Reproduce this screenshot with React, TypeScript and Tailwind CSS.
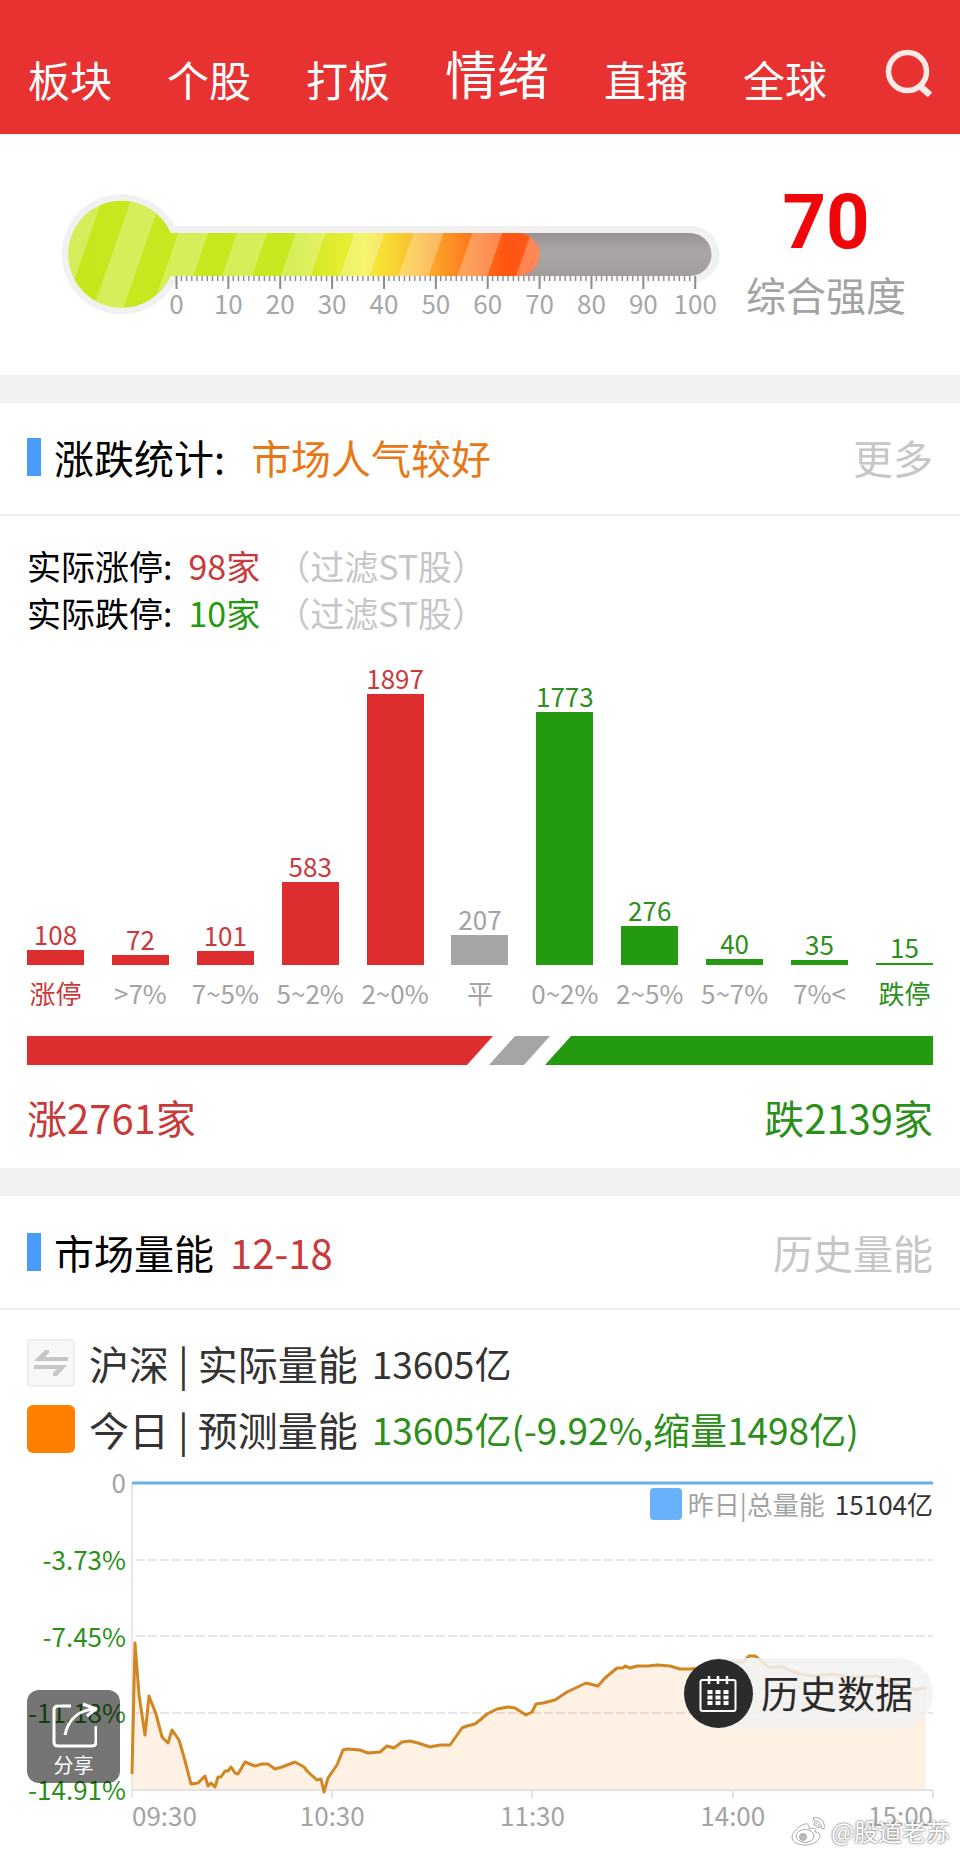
import { useState } from "react";

type Tone = "up" | "flat" | "down";

interface Range {
  label: string;
  count: number;
  tone: Tone;
}

const tabs = ["板块", "个股", "打板", "情绪", "直播", "全球"];

const ranges: Range[] = [
  { label: "涨停", count: 108, tone: "up" },
  { label: ">7%", count: 72, tone: "up" },
  { label: "7~5%", count: 101, tone: "up" },
  { label: "5~2%", count: 583, tone: "up" },
  { label: "2~0%", count: 1897, tone: "up" },
  { label: "平", count: 207, tone: "flat" },
  { label: "0~2%", count: 1773, tone: "down" },
  { label: "2~5%", count: 276, tone: "down" },
  { label: "5~7%", count: 40, tone: "down" },
  { label: "7%<", count: 35, tone: "down" },
  { label: "跌停", count: 15, tone: "down" },
];

const barTone = {
  up: "bg-[#dd2d2f]",
  flat: "bg-[#a5a5a5]",
  down: "bg-[#239a10]",
};

const textTone = {
  up: "text-[#c9393a]",
  flat: "text-[#a3a3a3]",
  down: "text-[#2b8f1a]",
};

const BAR_MAX = 271;
const maxCount = 1897;

const yLabels = ["0", "-3.73%", "-7.45%", "-11.18%", "-14.91%"];

// plot area is 801 x 307, y grows downwards from the 0 line
const points: [number, number][] = [
  [0, 291], [3, 160], [7, 212], [13, 252], [17, 213], [24, 231], [30, 254], [36, 260],
  [40, 247], [47, 257], [52, 274], [59, 301], [66, 300], [73, 293], [76, 303], [79, 300],
  [83, 304], [86, 294], [89, 294], [93, 288], [96, 288], [99, 284], [103, 290], [106, 291],
  [113, 279], [123, 283], [130, 281], [136, 281], [143, 286], [150, 284], [163, 279],
  [172, 284], [176, 289], [185, 297], [189, 296], [192, 309], [196, 295], [205, 282],
  [211, 267], [215, 266], [228, 267], [236, 270], [248, 269], [255, 263], [262, 265],
  [270, 259], [278, 258], [286, 260], [298, 264], [308, 262], [318, 262], [323, 255], [330, 245],
  [335, 243], [343, 241], [348, 237], [355, 231], [365, 226], [376, 224], [383, 225],
  [394, 232], [400, 229], [404, 221], [411, 220], [423, 217], [435, 209], [454, 200],
  [466, 203], [473, 195], [485, 185], [491, 185], [493, 183], [498, 185], [505, 183],
  [516, 183], [525, 182], [538, 183], [548, 186], [559, 186], [574, 184], [588, 181],
  [598, 179], [611, 179], [617, 173], [623, 173], [633, 181], [636, 184], [650, 184],
  [668, 191], [681, 193], [701, 191], [715, 194], [745, 193], [761, 200], [785, 207],
  [790, 205], [794, 206],
];
const linePath = "M" + points.map((p) => p.join(" ")).join("L");

const Thermometer = () => {
  const ticks = Array.from({ length: 101 }, (_, i) => i);
  const stripes = [-2, -1, 0, 1, 2, 3, 4, 5, 6];
  return (
    <svg viewBox="60 190 662 128" className="min-w-0 flex-1 overflow-visible" role="img" aria-label="综合强度 70">
      <defs>
        <linearGradient id="heat" gradientUnits="userSpaceOnUse" x1="68" y1="0" x2="540" y2="0">
          <stop offset="0" stopColor="#c5e81d" />
          <stop offset="0.48" stopColor="#c9e81f" />
          <stop offset="0.63" stopColor="#f2f03a" />
          <stop offset="0.72" stopColor="#fac52f" />
          <stop offset="0.82" stopColor="#fc8a22" />
          <stop offset="0.93" stopColor="#ff5512" />
          <stop offset="1" stopColor="#ff5a1a" />
        </linearGradient>
        <linearGradient id="tube" x1="0" y1="0" x2="0" y2="1">
          <stop offset="0" stopColor="#989494" />
          <stop offset="0.45" stopColor="#aba6a5" />
          <stop offset="1" stopColor="#a19d9c" />
        </linearGradient>
        <clipPath id="fill">
          <circle cx="121.7" cy="254.3" r="53.5" />
          <path d="M160 233H518a21.5 21.5 0 0 1 0 43H160Z" />
        </clipPath>
      </defs>
      <circle cx="121.7" cy="254.3" r="60" fill="#f1f1f1" />
      <path d="M150 226H691a28.5 28.5 0 0 1 0 57H150Z" fill="#f1f1f1" />
      <path d="M160 233H690a21.5 21.5 0 0 1 0 43H160Z" fill="url(#tube)" />
      <g clipPath="url(#fill)">
        <rect x="60" y="195" width="490" height="120" fill="url(#heat)" />
        {stripes.map((k) => {
          const x = 178.3 + k * 58.8;
          return (
            <path
              key={k}
              d={`M${x + 14} 193h30L${x + 2} 313h-30Z`}
              fill="#fff"
              fillOpacity="0.27"
            />
          );
        })}
      </g>
      <rect x="176" y="276" width="520" height="7" fill="#fff" fillOpacity="0.7" />
      {ticks.map((t) => (
        <rect
          key={t}
          x={175.5 + t * 5.187}
          y="276"
          width={t % 10 === 0 ? 2 : 1.4}
          height={t % 10 === 0 ? 13 : 5}
          fill="#8c8c8c"
        />
      ))}
      {ticks
        .filter((t) => t % 10 === 0)
        .map((t) => (
          <text key={t} x={176.5 + t * 5.187} y="314" fontSize="26" fill="#a6a6a6" textAnchor="middle">
            {t}
          </text>
        ))}
    </svg>
  );
};

const Histogram = () => (
  <div className="mt-[26px] flex justify-between">
    {ranges.map((r) => (
      <div key={r.label} className="flex w-[57px] flex-col items-center justify-end whitespace-nowrap text-[26px]">
        <span className={`leading-[32px] ${textTone[r.tone]}`}>{r.count}</span>
        <div
          className={`w-full ${barTone[r.tone]}`}
          style={{ height: Math.round((r.count / maxCount) * BAR_MAX) }}
        />
        <span
          className={`mt-3 leading-[32px] ${
            r.label === "涨停" || r.label === "跌停" ? textTone[r.tone] : "text-[#a3a3a3]"
          }`}
        >
          {r.label}
        </span>
      </div>
    ))}
  </div>
);

const VolumeChart = () => (
  <div className="relative mt-3 flex gap-[6px] text-[26px] leading-[32px]">
    <div className="flex h-[339px] w-[99px] flex-col justify-between text-right whitespace-nowrap">
      {yLabels.map((l) => (
        <span key={l} className={l === "0" ? "text-[#a3a3a3]" : "text-[#2b8f1a]"}>
          {l}
        </span>
      ))}
    </div>
    <div className="min-w-0 flex-1 pt-[17px]">
      <svg viewBox="0 0 801 316" preserveAspectRatio="none" className="block h-[316px] w-full overflow-visible">
        {[77, 153, 230].map((y) => (
          <path key={y} d={`M4 ${y}H801`} stroke="#e6e6e6" strokeWidth="2" strokeDasharray="9 3" />
        ))}
        <path d={`${linePath}V307H0Z`} fill="#ff8200" fillOpacity="0.11" />
        <path d="M0 0V315" stroke="#e8e8e8" strokeWidth="2" fill="none" />
        <path d="M0 307H801M200 307v8M400 307v8M601 307v8M801 307v8" stroke="#e2e2e2" strokeWidth="2" fill="none" />
        <path d="M0 0H801" stroke="#6fb0e2" strokeWidth="3" />
        <path d={linePath} fill="none" stroke="#d18623" strokeWidth="3" strokeLinejoin="round" />
      </svg>
      <div className="grid grid-cols-8 text-[#a3a3a3]">
        <span>09:30</span>
        <span className="col-span-2 text-center">10:30</span>
        <span className="col-span-2 text-center">11:30</span>
        <span className="col-span-2 text-center">14:00</span>
        <span className="text-right">15:00</span>
      </div>
    </div>
    <div className="absolute top-[22px] right-0 flex items-center">
      <span className="mr-[6px] size-8 rounded-sm bg-[#69b1fb]" />
      <span className="mr-[10px] text-[#a3a3a3]">昨日|总量能</span>
      <span className="text-[#333]">15104亿</span>
    </div>
  </div>
);

const App: React.FC = () => {
  const [activeTab, setActiveTab] = useState("情绪");

  return (
    <div className="relative min-h-screen bg-white pb-5 font-['Noto_Sans_CJK_SC',sans-serif] text-black">
      {/* Top tabs */}
      <header className="flex items-end justify-between bg-[#e83232] pt-[40px] pr-[27px] pb-7 pl-7 text-white">
        <nav className="flex items-end gap-[55px] whitespace-nowrap">
          {tabs.map((t) => (
            <button
              key={t}
              onClick={() => setActiveTab(t)}
              className={t === activeTab ? "text-[52px] leading-[66px]" : "text-[42px] leading-[54px]"}
            >
              {t}
            </button>
          ))}
        </nav>
        <button aria-label="搜索" className="mb-[9px]">
          <svg viewBox="0 0 48 48" className="size-12" fill="none" stroke="#ffe9e6" strokeWidth="5.500">
            <circle cx="22.500" cy="22.500" r="19" />
            <path d="M34.500 36.500l10.500 9.500" strokeWidth="6.500" />
          </svg>
        </button>
      </header>

      {/* Overall strength */}
      <section className="flex items-start border-b-[28px] border-[#f2f2f2] pt-14 pr-[53px] pb-[57px] pl-[60px]">
        <Thermometer />
        <div className="ml-[23px] flex w-[162px] flex-col items-center">
          <span className="font-['Roboto',sans-serif] text-[76px] leading-[64px] font-bold text-[#f00508]">70</span>
          <span className="mt-4 text-[40px] leading-[48px] whitespace-nowrap text-[#a3a3a3]">综合强度</span>
        </div>
      </section>

      {/* Advance / decline */}
      <section className="border-b-[28px] border-[#f2f2f2]">
        <div className="flex h-[113px] items-center border-b-2 border-[#ececec] px-[27px] pb-1 text-[40px] leading-[48px]">
          <span className="mr-[13px] h-[38px] w-[14px] bg-[#4a9cfb]" />
          <h2>涨跌统计:</h2>
          <span className="ml-[26px] text-[#e67817]">市场人气较好</span>
          <button className="ml-auto text-[#c6c6c6]">更多</button>
        </div>
        <div className="px-[27px] pt-[26px] pb-[26px]">
          <div className="text-[34px] leading-[47px]">
            <p className="flex">
              实际涨停:<span className="ml-4 text-[#c9393a]">98家</span>
              <span className="ml-4 text-[#c6c6c6]">（过滤ST股）</span>
            </p>
            <p className="flex">
              实际跌停:<span className="ml-4 text-[#239a10]">10家</span>
              <span className="ml-4 text-[#c6c6c6]">（过滤ST股）</span>
            </p>
          </div>
          <Histogram />
          <svg viewBox="0 0 906 29" preserveAspectRatio="none" className="mt-[27px] block h-[29px] w-full">
            <path d="M0 0H466L440 29H0Z" fill="#dd2d2f" />
            <path d="M488 0H523L497 29H462Z" fill="#a5a5a5" />
            <path d="M544 0H906V29H518Z" fill="#239a10" />
          </svg>
          <div className="mt-[27px] flex justify-between text-[40px] leading-[50px]">
            <span className="text-[#c9393a]">涨2761家</span>
            <span className="text-[#2b8f1a]">跌2139家</span>
          </div>
        </div>
      </section>

      {/* Market volume */}
      <section>
        <div className="flex h-[114px] items-center border-b-2 border-[#ececec] px-[27px] text-[40px] leading-[48px]">
          <span className="mr-[13px] h-[38px] w-[14px] bg-[#4a9cfb]" />
          <h2>市场量能</h2>
          <span className="ml-4 text-[#c9393a]">12-18</span>
          <button className="ml-auto text-[#c6c6c6]">历史量能</button>
        </div>
        <div className="px-[27px] pt-7">
          <div className="flex items-center text-[40px] leading-[50px] whitespace-nowrap text-[#333]">
            <button
              aria-label="切换"
              className="mr-[14px] flex size-12 items-center justify-center rounded-sm border-2 border-[#ededf0] bg-[#f8f8fa]"
            >
              <svg viewBox="0 0 34 28" className="h-7 w-[34px]" fill="#c6c6c8">
                <path d="M34 12H0L11 1h4v3L11 8H34Z" />
                <path d="M0 16H33L23 27h-4v-3L23 20H0Z" />
              </svg>
            </button>
            沪深 | 实际量能
            <span className="ml-[14px] text-[37px]">13605亿</span>
          </div>
          <div className="mt-4 flex items-center text-[40px] leading-[50px] whitespace-nowrap text-[#333]">
            <span className="mr-[14px] size-12 rounded-md bg-[#ff7f00]" />
            今日 | 预测量能
            <span className="ml-[14px] text-[37px] text-[#2b8f1a]">13605亿(-9.92%,缩量1498亿)</span>
          </div>
          <VolumeChart />
        </div>
      </section>

      {/* Floating actions */}
      <button className="absolute bottom-[72px] left-[27px] flex size-[93px] flex-col items-center rounded-xl bg-black/54 pt-3 text-white">
        <svg viewBox="0 0 46 46" className="size-[46px]" fill="none" stroke="#fff" strokeWidth="3">
          <path d="M20 4H7q-4 0-4 4v32q0 4 4 4h34q4 0 4-4V24" />
          <path d="M14 33C17 18 27 8 44 7M32 2l13 5-9 7" />
        </svg>
        <span className="text-[20px] leading-[34px]">分享</span>
      </button>
      <button className="absolute right-[27px] bottom-[126px] flex h-[71px] items-center gap-2 rounded-full bg-[#f2f2f2]/85 pr-5 text-[38px] leading-[48px] text-[#2b2b2b]">
        <span className="flex size-[69px] items-center justify-center rounded-full bg-[#2b2b2b]">
          <svg viewBox="0 0 38 38" className="size-[38px]" fill="none" stroke="#fff" strokeWidth="2">
            <rect x="1.500" y="5" width="35" height="31" rx="2" />
            <path d="M10 1v8M19 1v8M28 1v8" strokeWidth="2.500" />
            <path d="M8.500 17h5M16.500 17h5M24.500 17h5M8.500 22.500h5M16.500 22.500h5M24.500 22.500h5M8.500 28h5M16.500 28h5M24.500 28h5" strokeWidth="4" />
          </svg>
        </span>
        <span className="pb-1">历史数据</span>
      </button>
      <div className="absolute right-[10px] bottom-[6px] flex items-center gap-1 text-[24px] leading-[36px] text-white [text-shadow:0_0_2px_#777,0_0_3px_#999]">
        <svg viewBox="0 0 36 30" className="h-[30px] w-9" fill="#fff" stroke="#aaa" strokeWidth="1">
          <path d="M14 8C7 10 1 17 1 21c0 5 6 8 13 8 9 0 15-5 15-9 0-3-2-4-5-4 1-3-1-5-6-3 0-3 0-6-4-5Z" />
          <ellipse cx="14" cy="20" rx="9" ry="6.500" />
          <circle cx="12" cy="21" r="3.500" fill="#bbb" />
          <path d="M22 2c7-2 13 4 11 11l-3-1c1-5-3-8-7-7ZM23 7c4-1 6 2 5 5l-2-1c0-2-1-2-3-2Z" />
        </svg>
        <span>@股道老苏</span>
      </div>
    </div>
  );
};

export default App;
